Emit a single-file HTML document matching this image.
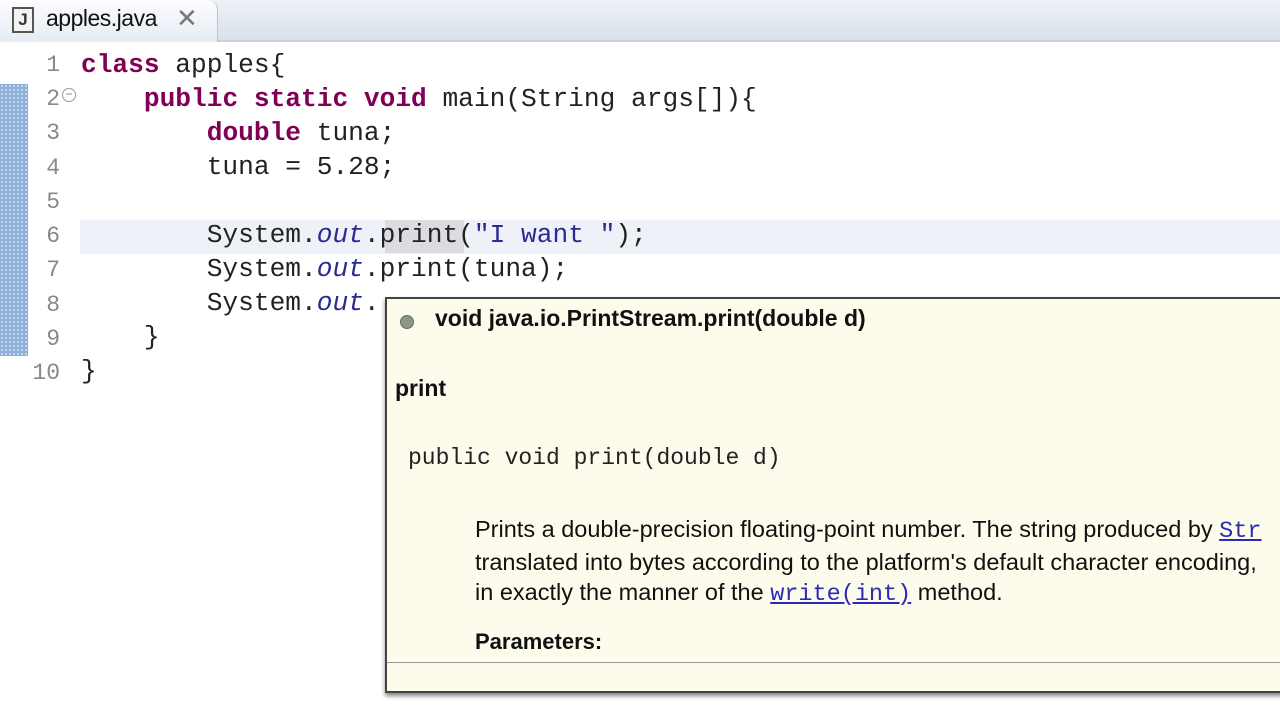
<!DOCTYPE html>
<html><head><style>
*{margin:0;padding:0;box-sizing:border-box}
body{width:1280px;height:720px;overflow:hidden;background:#fff;position:relative;font-family:"Liberation Mono",monospace}
.tabbar{position:absolute;left:0;top:0;width:1280px;height:42px;background:linear-gradient(#eef1f6,#d9e1ec);border-bottom:2px solid #c9d3e0}
.tab{position:absolute;left:0;top:0;width:218px;height:42px;background:linear-gradient(#fbfcfe,#e6ecf4);border-right:1px solid #b9c4d3;border-radius:0 10px 0 0}
.tab .t{position:absolute;left:46px;top:5px;font:23px "Liberation Sans",sans-serif;color:#111;letter-spacing:-0.5px}
.ic{position:absolute;left:12px;top:7px;width:22px;height:26px;border:2px solid #555;background:#f4f4f0;font:bold 17px "Liberation Sans";color:#334;text-align:center;line-height:22px}
.x{position:absolute;left:176px;top:4px;font:26px "DejaVu Sans";color:#777}
.gut{position:absolute;left:0;top:84px;width:28px;height:272px;background-color:#8fb0d8;background-image:radial-gradient(#c8dbf0 35%,transparent 40%);background-size:4px 4px}
.hl{position:absolute;left:80px;top:220px;width:1200px;height:34px;background:#eef1f8}
.sel{position:absolute;left:385px;top:220px;width:79px;height:33px;background:#dcdce0}
.ln{position:absolute;width:60px;text-align:right;font-size:23px;color:#888;left:0}
.code{position:absolute;left:81px;font-size:26.2px;color:#222;white-space:pre;line-height:34px}
.k{color:#7f0055;font-weight:bold}
.o{color:#2a2a90;font-style:italic}
.s{color:#2a2a90}
.pop{position:absolute;left:385px;top:297px;width:900px;height:396px;background:#fdfcec;border:2px solid #444;border-right:none;box-shadow:0 3px 4px #888}
.sans{font-family:"Liberation Sans",sans-serif;position:absolute;white-space:nowrap;color:#111}
a{color:#2b2bb5;text-decoration:underline;font-family:"Liberation Mono",monospace}
</style></head><body>
<div class="tabbar"><div class="tab"><div class="ic">J</div><div class="t">apples.java</div><div class="x">✕</div></div></div>
<div class="gut"></div>
<div class="hl"></div><div class="sel"></div>
<div class="ln" style="top:52px">1</div>
<div class="ln" style="top:86px">2</div>
<div style="position:absolute;left:62px;top:88px;width:14px;height:14px;border:1px solid #999;border-radius:50%;font:12px/11px sans-serif;text-align:center;color:#777">−</div>
<div class="ln" style="top:120px">3</div>
<div class="ln" style="top:155px">4</div>
<div class="ln" style="top:189px">5</div>
<div class="ln" style="top:223px">6</div>
<div class="ln" style="top:257px">7</div>
<div class="ln" style="top:292px">8</div>
<div class="ln" style="top:326px">9</div>
<div class="ln" style="top:360px">10</div>
<div class="code" style="top:48px"><span class="k">class</span> apples{
    <span class="k">public static void</span> main(String args[]){
        <span class="k">double</span> tuna;
        tuna = 5.28;

        System.<span class="o">out</span>.print(<span class="s">"I want "</span>);
        System.<span class="o">out</span>.print(tuna);
        System.<span class="o">out</span>.
    }
}</div>
<div class="pop">
<div style="position:absolute;left:13px;top:16px;width:14px;height:14px;border-radius:50%;background:#8a9a80;border:1px solid #667"></div>
<div class="sans" style="left:48px;top:6px;font-size:23px;font-weight:bold;letter-spacing:0">void java.io.PrintStream.print(double d)</div>
<div class="sans" style="left:8px;top:76px;font-size:23px;font-weight:bold">print</div>
<div style="position:absolute;left:21px;top:146px;font-size:23px;white-space:pre;color:#222">public void print(double d)</div>
<div class="sans" style="left:88px;top:215px;font-size:23.5px;letter-spacing:0;line-height:30px">Prints a double-precision floating-point number. The string produced by <a>Str</a><br>translated into bytes according to the platform's default character encoding,<br>in exactly the manner of the <a>write(int)</a> method.</div>
<div class="sans" style="left:88px;top:330px;font-size:22px;font-weight:bold">Parameters:</div>
<div style="position:absolute;left:0;top:363px;width:900px;border-top:1px solid #999"></div>
</div>
</body></html>
